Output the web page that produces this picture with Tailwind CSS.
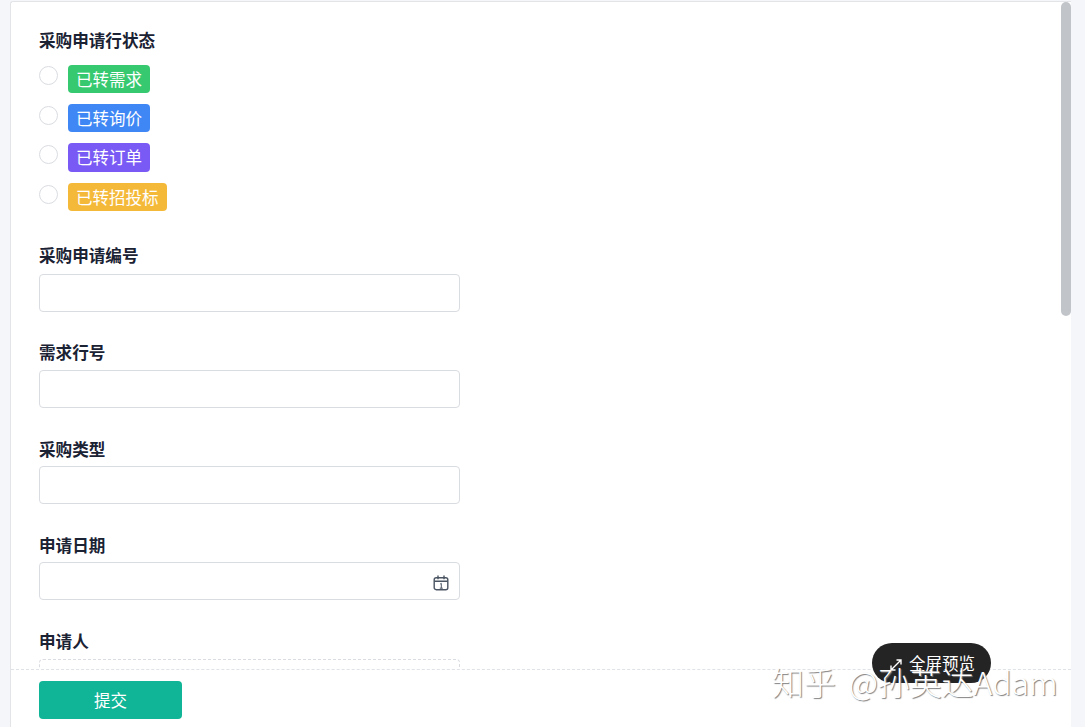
<!DOCTYPE html>
<html lang="zh">
<head>
<meta charset="utf-8">
<script src="https://cdn.jsdelivr.net/npm/@tailwindcss/browser@4"></script>
</head>
<body class="bg-[#f4f6f9] font-['Noto_Sans_CJK_SC','Noto_Sans',sans-serif]">
<div class="relative h-[727px] w-[1085px] overflow-hidden pl-[10px] pt-px">
  <div class="flex h-[726px] w-[1061px] flex-col rounded-tl-[3px] border-t border-l border-[#e2e4e8] bg-white">
    <div class="flex h-[667px] shrink-0">
      <div class="flex-1 overflow-hidden pl-[28px] pt-[26px]">
        <div class="h-[25px] text-[16.6px] leading-[25px] font-bold text-[#1a2233]">采购申请行状态</div>
        <div class="mt-[12px] flex flex-col gap-[11px]">
          <div class="flex h-[28px] items-start gap-[10px]">
            <span class="mt-px size-[19px] rounded-full border border-[#d9dce1] bg-white"></span>
            <span class="flex h-[28px] items-center rounded-[4px] bg-[#36c96f] px-[8px] text-[16.5px] text-white">已转需求</span>
          </div>
          <div class="flex h-[28px] items-start gap-[10px]">
            <span class="mt-[2px] size-[19px] rounded-full border border-[#d9dce1] bg-white"></span>
            <span class="flex h-[28px] items-center rounded-[4px] bg-[#3f87f5] px-[8px] text-[16.5px] text-white">已转询价</span>
          </div>
          <div class="flex h-[29px] items-start gap-[10px]">
            <span class="mt-[2px] size-[19px] rounded-full border border-[#d9dce1] bg-white"></span>
            <span class="flex h-[29px] items-center rounded-[4px] bg-[#7a5af5] px-[8px] text-[16.5px] text-white">已转订单</span>
          </div>
          <div class="flex h-[28px] items-start gap-[10px]">
            <span class="mt-[2px] size-[19px] rounded-full border border-[#d9dce1] bg-white"></span>
            <span class="flex h-[28px] items-center rounded-[4px] bg-[#f5b93a] px-[8px] text-[16.5px] text-white">已转招投标</span>
          </div>
        </div>
        <div class="mt-[32px] h-[25px] text-[16.6px] leading-[25px] font-bold text-[#1a2233]">采购申请编号</div>
        <div class="mt-[6px] h-[38px] w-[421px] rounded-[4px] border border-[#d9dce1] bg-white"></div>
        <div class="mt-[28px] h-[25px] text-[16.6px] leading-[25px] font-bold text-[#1a2233]">需求行号</div>
        <div class="mt-[5px] h-[38px] w-[421px] rounded-[4px] border border-[#d9dce1] bg-white"></div>
        <div class="mt-[29px] h-[25px] text-[16.6px] leading-[25px] font-bold text-[#1a2233]">采购类型</div>
        <div class="mt-[4px] h-[38px] w-[421px] rounded-[4px] border border-[#d9dce1] bg-white"></div>
        <div class="mt-[29px] h-[25px] text-[16.6px] leading-[25px] font-bold text-[#1a2233]">申请日期</div>
        <div class="mt-[4px] flex h-[38px] w-[421px] items-center justify-end rounded-[4px] border border-[#d9dce1] bg-white pr-[10px]">
          <svg class="mt-[3px]" width="16" height="16" viewBox="0 0 16 16" fill="none" stroke="#4b5563" stroke-width="1.4">
            <rect x="1.2" y="2.7" width="13.6" height="12" rx="2"/>
            <path d="M1.2 6.3h13.6M5 .6v3.6M11 .6v3.6"/>
            <path d="M7.2 9l1.1-.6v4.8M6.8 13.2h3" stroke-width="1"/>
          </svg>
        </div>
        <div class="mt-[29px] h-[25px] text-[16.6px] leading-[25px] font-bold text-[#1a2233]">申请人</div>
        <div class="mt-[5px] h-[38px] w-[421px] rounded-[4px] border border-dashed border-[#d9dce1] bg-white"></div>
      </div>
      <div class="h-full w-[10px] shrink-0 bg-white">
        <div class="h-[314px] w-[10px] rounded-[5px] bg-[#c1c4c9]"></div>
      </div>
    </div>
    <div class="flex-1 border-t border-dashed border-[#dfe2e6] pl-[28px] pt-[11px]">
      <button class="h-[38px] w-[143px] rounded-[4px] bg-[#0fb596] text-[16.5px] text-white">提交</button>
    </div>
  </div>

  <div class="absolute left-[872px] top-[643px] flex h-[40px] w-[119px] items-center rounded-[20px] bg-[#242424] pl-[17px] text-[16.5px] text-white">
    <svg class="mr-[6px] mt-[3px]" width="14" height="14" viewBox="0 0 14 14" fill="none" stroke="#fff" stroke-width="1.4">
      <path d="M2 12L12 2M7.5 2H12v4.5M2 7.5V12h4.5"/>
    </svg>
    <span>全屏预览</span>
  </div>
  <div class="absolute left-[772px] top-[659px] text-[32px] leading-[44px] font-light tracking-[-0.1px] [word-spacing:6px] whitespace-nowrap text-white [text-shadow:1px_1px_1px_#7f7f7f]">知乎 @孙英达Adam</div>
</div>
</body>
</html>
